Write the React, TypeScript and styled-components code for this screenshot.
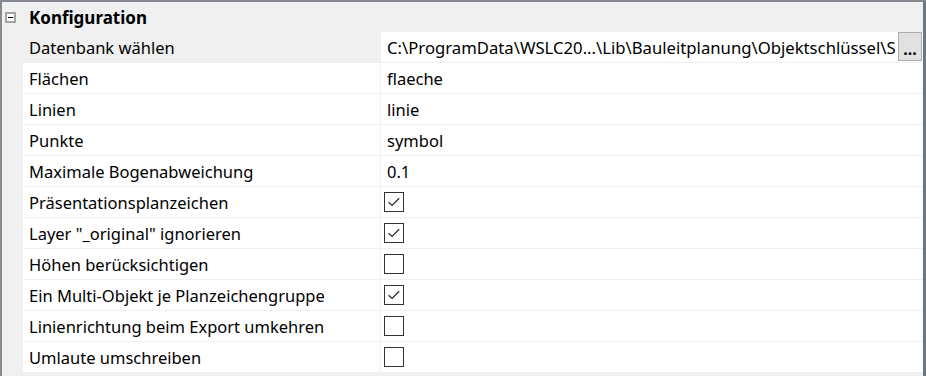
import React from "react";
import styled, { createGlobalStyle } from "styled-components";

const GlobalStyle = createGlobalStyle`
  html, body {
    margin: 0;
    padding: 0;
    background: #ffffff;
  }
  body {
    font-family: "Noto Sans", "Open Sans", sans-serif;
    font-size: 16.5px;
    color: #000;
  }
`;

type Property =
  | { label: string; kind: "text"; value: string }
  | { label: string; kind: "path"; value: string }
  | { label: string; kind: "check"; value: boolean };

const properties: Property[] = [
  {
    label: "Datenbank wählen",
    kind: "path",
    value: "C:\\ProgramData\\WSLC20...\\Lib\\Bauleitplanung\\Objektschlüssel\\S",
  },
  { label: "Flächen", kind: "text", value: "flaeche" },
  { label: "Linien", kind: "text", value: "linie" },
  { label: "Punkte", kind: "text", value: "symbol" },
  { label: "Maximale Bogenabweichung", kind: "text", value: "0.1" },
  { label: "Präsentationsplanzeichen", kind: "check", value: true },
  { label: 'Layer "_original" ignorieren', kind: "check", value: true },
  { label: "Höhen berücksichtigen", kind: "check", value: false },
  { label: "Ein Multi-Objekt je Planzeichengruppe", kind: "check", value: true },
  { label: "Linienrichtung beim Export umkehren", kind: "check", value: false },
  { label: "Umlaute umschreiben", kind: "check", value: false },
];

/**
 * A property grid with a single expanded category.
 * The first row is selected, so its label cell is shaded.
 */
function App() {
  return (
    <>
      <GlobalStyle />
      <Frame>
        <CategoryRow>
          <Toggle />
          <CategoryTitle>Konfiguration</CategoryTitle>
        </CategoryRow>
        {properties.map((p, i) => (
          <Row key={p.label}>
            <Margin />
            <LabelCell $selected={i === 0}>{p.label}</LabelCell>
            <ValueCell>
              {p.kind === "check" ? (
                <Checkbox>
                  {p.value && (
                    <svg width="16" height="16" viewBox="0 0 16 16">
                      <path d="M2.6 8.2 L6.1 11.4 L13.2 4.2" fill="none" stroke="#333" strokeWidth="1.4" />
                    </svg>
                  )}
                </Checkbox>
              ) : (
                <ValueText $path={p.kind === "path"}>{p.value}</ValueText>
              )}
              {p.kind === "path" && <EllipsisButton>...</EllipsisButton>}
            </ValueCell>
          </Row>
        ))}
      </Frame>
    </>
  );
}

export default App;

const Frame = styled.div`
  width: 926px;
  height: 376px;
  box-sizing: border-box;
  border-top: 2px solid #868a91;
  border-left: 2px solid #868a91;
  border-right: 3px solid #6f7680;
  background: #f0f0f0;
  overflow: hidden;
  display: flex;
  flex-direction: column;
`;

const CategoryRow = styled.div`
  height: 30px;
  flex-shrink: 0;
  display: flex;
  align-items: center;
  background: #f0f0f0;
`;

const Toggle = styled.div`
  position: relative;
  width: 11px;
  height: 11px;
  margin-left: 3px;
  margin-right: 13px;
  box-sizing: border-box;
  border: 2px solid #a4a4a4;
  background: #fff;
  &::after {
    content: "";
    position: absolute;
    left: 1px;
    top: 3px;
    width: 5px;
    height: 1px;
    background: #000;
  }
`;

const CategoryTitle = styled.span`
  font-weight: 700;
  font-size: 17px;
`;

const Row = styled.div`
  height: 31px;
  flex-shrink: 0;
  display: grid;
  grid-template-columns: 21px 358px 1fr;
`;

const Margin = styled.div`
  background: #f0f0f0;
`;

const LabelCell = styled.div<{ $selected?: boolean }>`
  background: ${(p) => (p.$selected ? "#f0f0f0" : "#ffffff")};
  border-right: 1px solid #f0f0f0;
  border-bottom: 1px solid #f0f0f0;
  padding-left: 6px;
  display: flex;
  align-items: center;
  white-space: nowrap;
  overflow: hidden;
`;

const ValueCell = styled.div`
  background: #ffffff;
  border-bottom: 1px solid #f0f0f0;
  padding-left: 6px;
  display: flex;
  align-items: center;
  min-width: 0;
`;

const ValueText = styled.span<{ $path?: boolean }>`
  flex: 1;
  min-width: 0;
  white-space: nowrap;
  overflow: hidden;
  font-size: ${(p) => (p.$path ? "16.7px" : "16.5px")};
`;

const Checkbox = styled.div`
  width: 20px;
  height: 20px;
  margin-left: -3px;
  box-sizing: border-box;
  border: 1.5px solid #333;
  display: flex;
  align-items: center;
  justify-content: center;
  background: #fff;
`;

const EllipsisButton = styled.div`
  width: 24px;
  height: 29px;
  flex-shrink: 0;
  box-sizing: border-box;
  align-self: flex-start;
  border: 1px solid #adadad;
  background: #e1e1e1;
  display: flex;
  align-items: flex-end;
  justify-content: center;
  padding-bottom: 3px;
  font-size: 16px;
  font-weight: 700;
  line-height: 1;
  margin-right: 1px;
`;
